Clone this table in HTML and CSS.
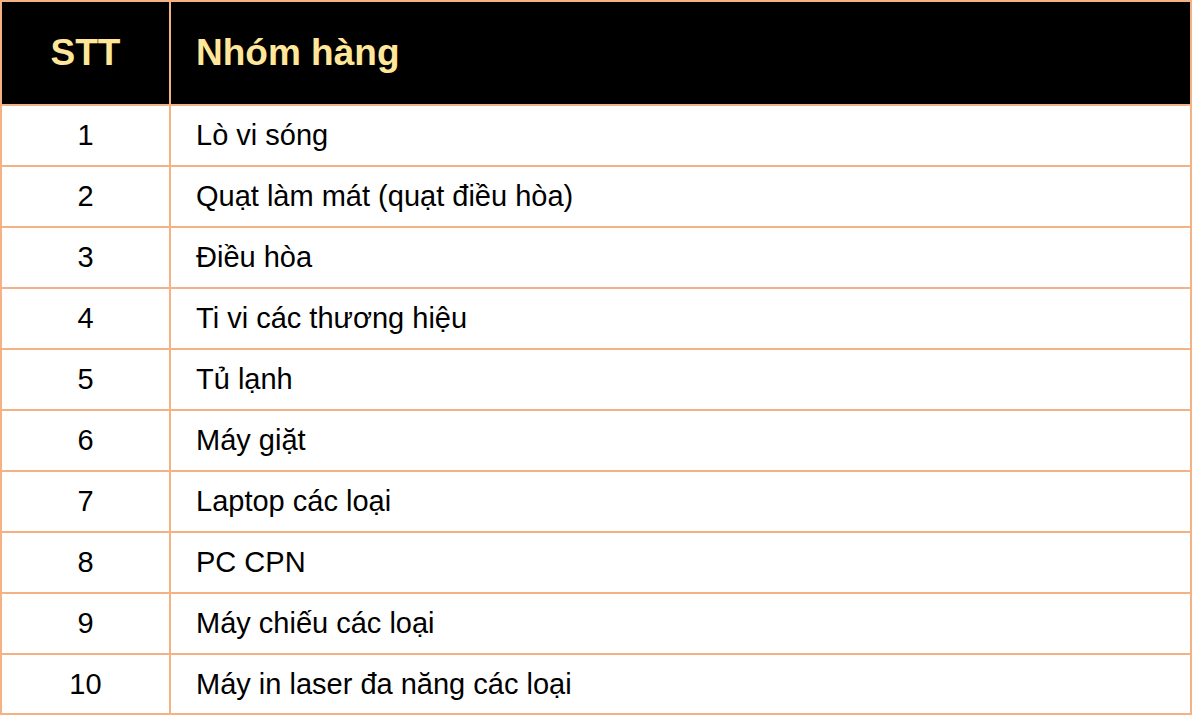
FILE: index.html
```html
<!DOCTYPE html>
<html lang="vi">
<head>
<meta charset="utf-8">
<link rel="stylesheet" href="styles.css">
</head>
<body>
<table class="grid">
  <colgroup><col class="c-num"><col class="c-name"></colgroup>
  <thead>
    <tr><th class="num">STT</th><th class="name">Nhóm hàng</th></tr>
  </thead>
  <tbody>
    <tr><td class="num">1</td><td class="name">Lò vi sóng</td></tr>
    <tr><td class="num">2</td><td class="name">Quạt làm mát (quạt điều hòa)</td></tr>
    <tr><td class="num">3</td><td class="name">Điều hòa</td></tr>
    <tr><td class="num">4</td><td class="name">Ti vi các thương hiệu</td></tr>
    <tr><td class="num">5</td><td class="name">Tủ lạnh</td></tr>
    <tr><td class="num">6</td><td class="name">Máy giặt</td></tr>
    <tr><td class="num">7</td><td class="name">Laptop các loại</td></tr>
    <tr><td class="num">8</td><td class="name">PC CPN</td></tr>
    <tr><td class="num">9</td><td class="name">Máy chiếu các loại</td></tr>
    <tr class="last"><td class="num">10</td><td class="name">Máy in laser đa năng các loại</td></tr>
  </tbody>
</table>
</body>
</html>
```
FILE: styles.css
```css
html, body {
  margin: 0;
  padding: 0;
  background: #ffffff;
}
.grid {
  border-collapse: collapse;
  width: 1192px;
  font-family: "Liberation Sans", Arial, sans-serif;
  table-layout: fixed;
}
.c-num { width: 169px; }
.grid th, .grid td {
  border: 2px solid #f4b183;
  padding: 0;
  vertical-align: middle;
}
.grid th {
  background: #000000;
  color: #ffe699;
  font-weight: bold;
  font-size: 37px;
  height: 102px;
}
.grid td {
  color: #000000;
  font-size: 29px;
  height: 59px;
}
.grid .last td { height: 58px; }
.num { text-align: center; }
.name { text-align: left; padding-left: 25px !important; }
```
